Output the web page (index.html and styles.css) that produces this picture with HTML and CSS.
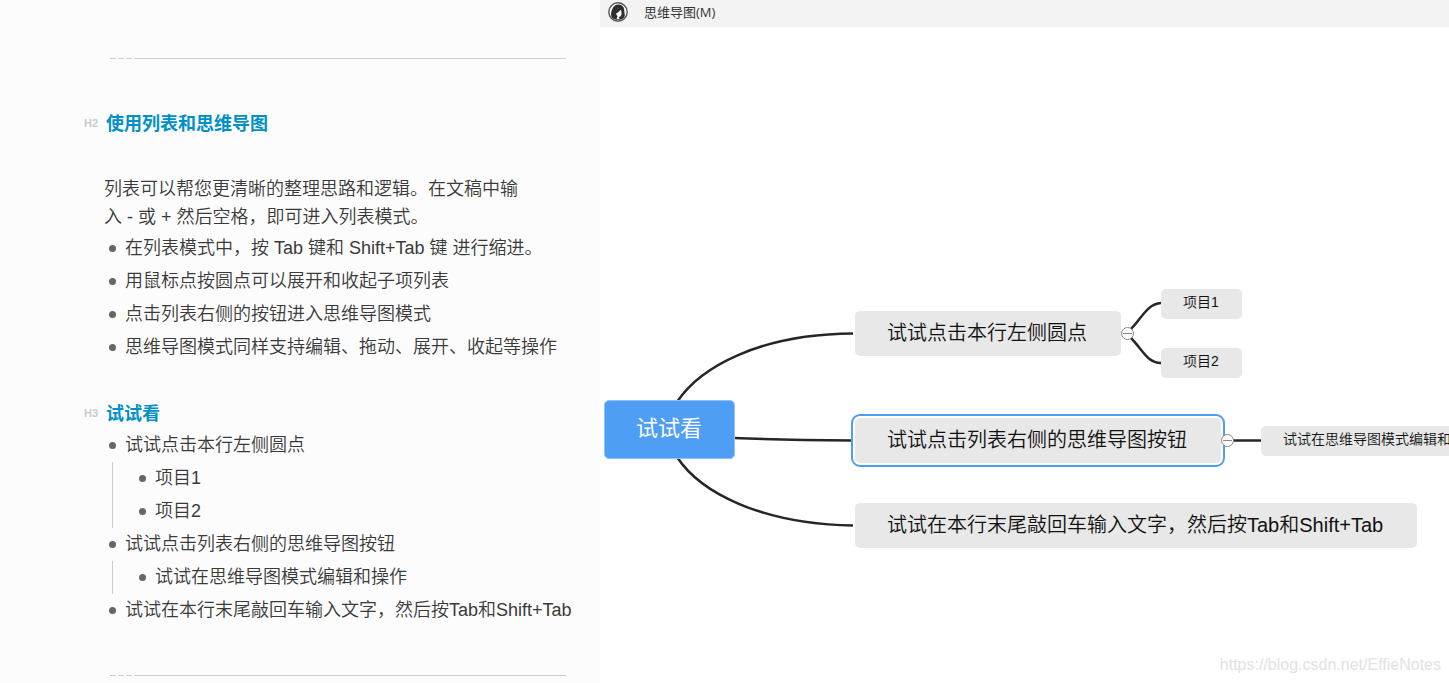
FILE: index.html
```html
<!DOCTYPE html>
<html lang="zh-CN">
<head>
<meta charset="utf-8">
<title>思维导图</title>
<link rel="stylesheet" href="styles.css">
</head>
<body>
<div class="app">
  <article class="doc">
    <hr class="rule">
    <h2 class="heading heading-main"><span class="level">H2</span>使用列表和思维导图</h2>
    <p class="intro">列表可以帮您更清晰的整理思路和逻辑。在文稿中输入 - 或 + 然后空格，即可进入列表模式。</p>
    <ul class="list">
      <li>在列表模式中，按 Tab 键和 Shift+Tab 键 进行缩进。</li>
      <li>用鼠标点按圆点可以展开和收起子项列表</li>
      <li>点击列表右侧的按钮进入思维导图模式</li>
      <li>思维导图模式同样支持编辑、拖动、展开、收起等操作</li>
    </ul>
    <h3 class="heading heading-sub"><span class="level">H3</span>试试看</h3>
    <ul class="list">
      <li>试试点击本行左侧圆点
        <ul class="sublist">
          <li>项目1</li>
          <li>项目2</li>
        </ul>
      </li>
      <li>试试点击列表右侧的思维导图按钮
        <ul class="sublist">
          <li>试试在思维导图模式编辑和操作</li>
        </ul>
      </li>
      <li>试试在本行末尾敲回车输入文字，然后按Tab和Shift+Tab</li>
    </ul>
    <hr class="rule rule-end">
  </article>

  <main class="map">
    <header class="menubar">
      <svg class="avatar" viewBox="0 0 20 20" aria-hidden="true">
        <circle cx="10" cy="10" r="9.2" fill="#fff" stroke="#555" stroke-width="1.4"/>
        <path d="M3.800 15.500C2.200 12 3.600 8.500 4.600 6.500C6 3.200 8.700 2 11.500 2.600C15.200 3.400 16.400 6.500 16.300 9C16.500 11.500 17.400 13.500 16.200 15.300C14.700 17.300 12 18.200 9.800 18C7.500 17.900 5.200 17.200 3.800 15.500Z" fill="#2e2e2e"/>
        <path d="M8.200 11.300C9.800 10.800 11.500 9.500 12.300 7.800C13.600 9 13.900 10.700 13.400 12.400C13 13.900 12.200 14.800 11 14.700C10.700 15.500 11 16.200 12 17L8.600 17.200L9.500 14.200C8.800 13.500 8.300 12.500 8.200 11.300Z" fill="#fff"/>
      </svg>
      <button class="menu" type="button">思维导图(M)</button>
    </header>
    <div class="canvas">
      <svg class="links" width="849" height="656" aria-hidden="true">
        <path d="M77 375C100 340 160 307 253 306.500"/>
        <path d="M134 411Q180 413 252 413.500"/>
        <path d="M77 430C100 465 160 497 253 498.500"/>
        <path d="M531 302C542 291 547 277 561 276"/>
        <path d="M531 311C542 322 547 336 561 336"/>
        <path d="M632 413.500H661"/>
      </svg>
      <div class="node root">试试看</div>
      <div class="node branch branch-1">试试点击本行左侧圆点</div>
      <div class="node branch branch-2 selected">试试点击列表右侧的思维导图按钮</div>
      <div class="node branch branch-3">试试在本行末尾敲回车输入文字，然后按Tab和Shift+Tab</div>
      <div class="node leaf leaf-1">项目1</div>
      <div class="node leaf leaf-2">项目2</div>
      <div class="node leaf leaf-3">试试在思维导图模式编辑和</div>
      <button class="toggle toggle-1" type="button" aria-label="收起"></button>
      <button class="toggle toggle-2" type="button" aria-label="收起"></button>
      <span class="watermark">https://blog.csdn.net/EffieNotes</span>
    </div>
  </main>
</div>
</body>
</html>
```
FILE: styles.css
```css
* { box-sizing: border-box; }

body {
  margin: 0;
  font-family: "Liberation Sans", "Noto Sans CJK SC", sans-serif;
  color: #3a3a3a;
}

.app {
  display: flex;
  height: 100vh;
  overflow: hidden;
}

/* Document pane */
.doc {
  flex: 0 0 600px;
  padding: 58px 0 0 104px;
  background: #fcfcfc;
  font-size: 18px;
  font-weight: 350;
}

.rule {
  width: 456px;
  height: 1px;
  margin: 0 0 0 6px;
  border: 0;
  background:
    linear-gradient(#ccc, #ccc) 24px 0 / 100% 1px no-repeat,
    repeating-linear-gradient(90deg, #ccc 0 6px, transparent 6px 8px);
}

.rule-end { margin-top: 48px; }

.heading {
  display: flex;
  align-items: center;
  gap: 8px;
  margin: 0 0 0 -20px;
  font-size: 18px;
  line-height: 28px;
  font-weight: 700;
  color: #0090c8;
}

.heading-main { margin-top: 51px; }
.heading-sub { margin: 36px 0 1px -20px; }

.level {
  font-size: 11px;
  line-height: 14px;
  padding-bottom: 3px;
  color: #c8cacd;
}

.intro {
  width: 424px;
  margin: 37px 0 1px;
  line-height: 28px;
}

.list,
.sublist {
  margin: 0;
  padding: 0;
  list-style: none;
  line-height: 33px;
  white-space: nowrap;
}

.list li {
  position: relative;
  padding-left: 21px;
}

.list li::before {
  content: "";
  position: absolute;
  top: 13px;
  left: 5px;
  width: 7px;
  height: 7px;
  border-radius: 50%;
  background: #666;
}

.sublist {
  margin-left: -13px;
  padding-left: 21px;
  border-left: 1px solid #ccc;
}

/* Mind map pane */
.map {
  flex: 1;
  min-width: 0;
  display: flex;
  flex-direction: column;
  background: #fff;
}

.menubar {
  display: flex;
  align-items: center;
  gap: 16px;
  height: 27px;
  padding: 0 8px 3px;
  background: #f3f3f3;
}

.avatar {
  width: 20px;
  height: 20px;
}

.menu {
  padding: 0;
  border: 0;
  background: none;
  font-family: "Open Sans", "Noto Sans CJK SC", sans-serif;
  font-size: 13px;
  font-weight: 400;
  line-height: 20px;
  color: #333;
}

.canvas {
  position: relative;
  flex: 1;
  overflow: hidden;
}

.links {
  position: absolute;
  top: 0;
  left: 0;
  fill: none;
  stroke: #262626;
  stroke-width: 2.5;
}

.node {
  position: absolute;
  border-radius: 5px;
  background: #e8e8e8;
  color: #111;
  font-weight: 350;
  white-space: nowrap;
}

.root {
  top: 373px;
  left: 4px;
  padding: 0 32px 1px 31px;
  border: 1px solid #8fc2f8;
  background: #4d9ef4;
  color: #fff;
  font-size: 22px;
  font-weight: 400;
  line-height: 56px;
}

.branch {
  left: 255px;
  padding: 0 34px 1px 32px;
  font-size: 20px;
  line-height: 44px;
}

.branch-1 { top: 284px; }
.branch-2 { top: 391px; }
.branch-3 { top: 476px; }

.selected {
  outline: 2px solid #4d9ef4;
  outline-offset: 2px;
}

.leaf {
  padding: 0 23px 3px 22px;
  font-size: 14px;
  line-height: 27px;
}

.leaf-1 { top: 262px; left: 561px; }
.leaf-2 { top: 321px; left: 561px; }
.leaf-3 { top: 399px; left: 661px; }

.toggle {
  position: absolute;
  width: 13px;
  height: 13px;
  padding: 0;
  border: 1px solid #888;
  border-radius: 50%;
  background: linear-gradient(#888, #888) center / 9px 1px no-repeat #fff;
}

.toggle-1 { top: 300px; left: 521px; }
.toggle-2 { top: 407px; left: 621px; }

.watermark {
  position: absolute;
  right: 8px;
  bottom: 8px;
  font-size: 16px;
  line-height: 20px;
  color: #e2e2e2;
}
```
